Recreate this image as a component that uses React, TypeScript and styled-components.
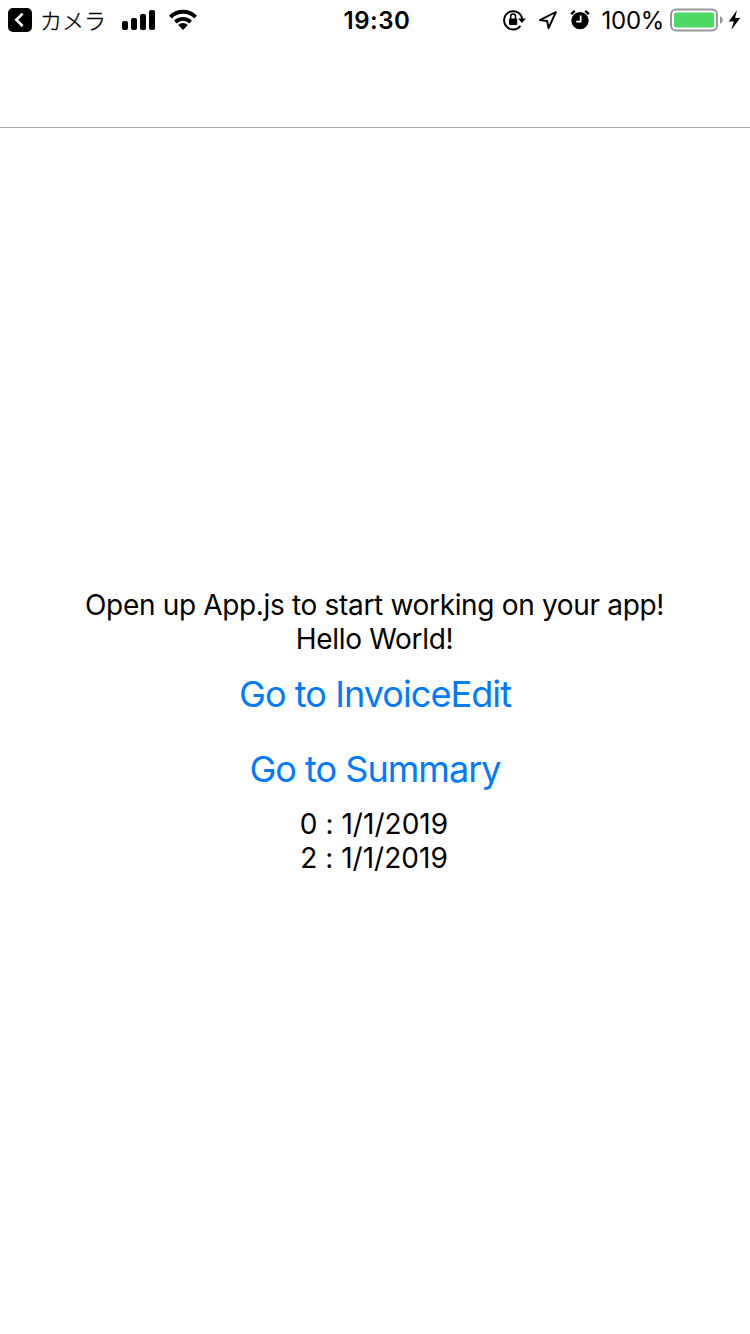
import React from "react";
import styled, { createGlobalStyle } from "styled-components";

const GlobalStyle = createGlobalStyle`
  body {
    margin: 0;
    background: #fff;
    color: #000;
    font-family: Inter, "Noto Sans CJK JP", sans-serif;
  }
`;

const Screen = styled.div`
  display: flex;
  flex-direction: column;
  width: 750px;
  height: 1334px;
  overflow: hidden;
`;

const Header = styled.header`
  box-sizing: border-box;
  height: 128px;
  border-bottom: 1px solid #a7a7aa;
`;

const StatusBar = styled.div`
  display: grid;
  grid-template-columns: 1fr auto 1fr;
  align-items: center;
  height: 40px;
  padding: 0 9px 0 8px;
`;

const StatusGroup = styled.div<{ $end?: boolean }>`
  display: flex;
  align-items: center;
  justify-content: ${(p) => (p.$end ? "flex-end" : "flex-start")};
`;

const Icon = styled.svg<{ $gap?: number }>`
  display: block;
  flex: none;
  margin-left: ${(p) => p.$gap ?? 0}px;
`;

const BackLabel = styled.span`
  margin: 0 16px 0 8px;
  padding-bottom: 2px;
  font-family: "Noto Sans CJK JP", sans-serif;
  font-weight: 300;
  font-size: 22px;
  line-height: 38px;
  -webkit-text-stroke: 0.3px #000;
`;

const Clock = styled.time`
  padding: 2px 0 0 5px;
  font-size: 24px;
  font-weight: 600;
  line-height: 38px;
  letter-spacing: 0.5px;
`;

const Percent = styled.span`
  margin: 0 6px 0 12px;
  padding-top: 2px;
  font-size: 24px;
  line-height: 38px;
  letter-spacing: -0.3px;
`;

const Content = styled.main`
  flex: 1;
  display: flex;
  flex-direction: column;
  align-items: center;
  justify-content: center;
`;

const Line = styled.div<{ $tracking: number }>`
  padding-right: 1px;
  font-size: 28px;
  line-height: 34px;
  letter-spacing: ${(p) => p.$tracking}px;
  white-space: nowrap;
`;

const DateList = styled.div`
  display: flex;
  flex-direction: column;
  align-items: center;
  margin: 1px 0 -1px;
  padding-right: 1px;
`;

const LinkButton = styled.button<{ $tracking: number }>`
  padding: 17px 16px 15px;
  border: 0;
  background: none;
  color: #007aff;
  font-family: inherit;
  font-size: 36px;
  line-height: 43px;
  letter-spacing: ${(p) => p.$tracking}px;
  white-space: nowrap;
`;

const BackIcon = () => (
  <Icon width="24" height="26" viewBox="0 0 24 26">
    <rect y="1" width="24" height="24" rx="5" />
    <path d="M14.6 6.6 8.4 12.8l6.2 6.3" fill="none" stroke="#fff" strokeWidth="2.7" />
  </Icon>
);

const SignalIcon = () => (
  <Icon width="34" height="22" viewBox="0 0 34 22">
    <rect x="0" y="12" width="6" height="9" rx="2" />
    <rect x="9" y="9" width="6" height="12" rx="2" />
    <rect x="18" y="5" width="6" height="16" rx="2" />
    <rect x="27" y="1" width="6" height="20" rx="2" />
  </Icon>
);

const WifiIcon = () => (
  <Icon $gap={13} width="28" height="22" viewBox="0 0 28 22">
    <path d="M1.4 8.1a17.8 17.8 0 0 1 25.2 0" fill="none" stroke="#000" strokeWidth="4" />
    <path d="M6.4 13.1a10.8 10.8 0 0 1 15.2 0" fill="none" stroke="#000" strokeWidth="3.8" />
    <path d="m14 21-4.8-4.9a6.8 6.8 0 0 1 9.6 0z" />
  </Icon>
);

const RotationLockIcon = () => (
  <Icon width="23" height="22" viewBox="0 0 23 22">
    <path d="M17.4 16.9A9.1 9.1 0 1 1 19.2 10" fill="none" stroke="#000" strokeWidth="1.9" />
    <path d="M15.1 9.5h7.8l-3.9 4.6z" />
    <rect x="6" y="9.5" width="8.2" height="6.4" rx="0.8" />
    <path d="M7.7 10V7.4a2.4 2.4 0 0 1 4.8 0V10" fill="none" stroke="#000" strokeWidth="1.5" />
  </Icon>
);

const LocationIcon = () => (
  <Icon $gap={12} width="20" height="20" viewBox="0 0 20 20">
    <path
      d="M17.9 2 1.8 10.1l7.3.9 1.5 7.2z"
      fill="none"
      stroke="#000"
      strokeWidth="1.9"
      strokeLinejoin="round"
    />
  </Icon>
);

const AlarmIcon = () => (
  <Icon $gap={12} width="20" height="22" viewBox="0 0 20 22">
    <circle cx="10" cy="11.6" r="8.7" />
    <path d="M1.3 5.2A12 12 0 0 1 4.9 2M18.7 5.2A12 12 0 0 0 15.1 2" fill="none" stroke="#000" strokeWidth="2.5" />
    <path d="M10.7 6.6v6H6.2" fill="none" stroke="#fff" strokeWidth="1.7" />
  </Icon>
);

const BatteryIcon = () => (
  <Icon width="54" height="24" viewBox="0 0 54 24">
    <rect x="1" y="1.5" width="46" height="21" rx="5" fill="none" stroke="#98989b" strokeWidth="2" />
    <rect x="4" y="4.5" width="40" height="15" rx="2" fill="#4cd964" />
    <path d="M50 8.3c3.7 1.2 3.7 6.2 0 7.4z" fill="#98989b" />
  </Icon>
);

const BoltIcon = () => (
  <Icon $gap={4} width="13" height="22" viewBox="0 0 13 22">
    <path d="M9 1 .8 12.4h5L3.2 21 12.2 9H7.1z" />
  </Icon>
);

export default function App() {
  return (
    <>
      <GlobalStyle />
      <Screen>
        <Header>
          <StatusBar>
            <StatusGroup>
              <BackIcon />
              <BackLabel>カメラ</BackLabel>
              <SignalIcon />
              <WifiIcon />
            </StatusGroup>
            <Clock>19:30</Clock>
            <StatusGroup $end>
              <RotationLockIcon />
              <LocationIcon />
              <AlarmIcon />
              <Percent>100%</Percent>
              <BatteryIcon />
              <BoltIcon />
            </StatusGroup>
          </StatusBar>
        </Header>
        <Content>
          <Line $tracking={-0.33}>Open up App.js to start working on your app!</Line>
          <Line $tracking={-0.3}>Hello World!</Line>
          <LinkButton $tracking={-0.92}>Go to InvoiceEdit</LinkButton>
          <LinkButton $tracking={-0.97}>Go to Summary</LinkButton>
          <DateList>
            <Line $tracking={0.03}>0 : 1/1/2019</Line>
            <Line $tracking={0.03}>2 : 1/1/2019</Line>
          </DateList>
        </Content>
      </Screen>
    </>
  );
}
